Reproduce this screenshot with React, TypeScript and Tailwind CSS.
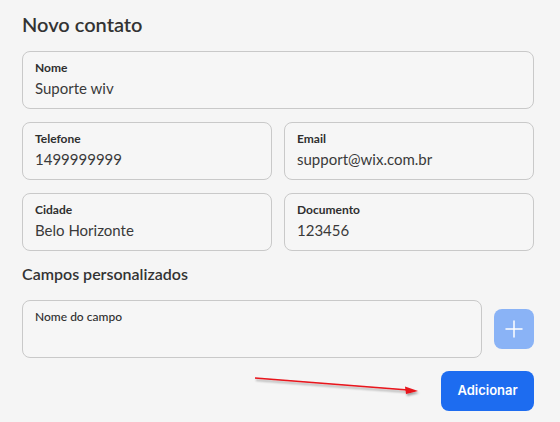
function Field({ label, value, bold = true, className = "" }: { label: string; value?: string; bold?: boolean; className?: string }) {
  return (
    <div className={`h-[58px] rounded-[8px] border border-[#c9c9c9] bg-[#f6f6f6] px-[12px] pt-[8px] ${className}`}>
      <div className={`text-[12px] leading-[16px] text-[#2f2f2f] ${bold ? "font-bold" : "font-medium"}`}>{label}</div>
      {value && <div className="mt-[1px] text-[15px] leading-[22px] text-[#3a3a3a]">{value}</div>}
    </div>
  );
}

export default function App() {
  return (
    <div className="relative min-h-screen w-full bg-[#f5f5f5] pl-[22px] pr-[26px] pt-[10px] font-['Lato',sans-serif]">
      <h1 className="text-[20px] leading-[28px] font-semibold text-[#333]">Novo contato</h1>

      <div className="mt-[13px] flex flex-col gap-[13px]">
        <Field label="Nome" value="Suporte wiv" />
        <div className="grid grid-cols-2 gap-[12px]">
          <Field label="Telefone" value="1499999999" />
          <Field label="Email" value="support@wix.com.br" />
        </div>
        <div className="grid grid-cols-2 gap-[12px]">
          <Field label="Cidade" value="Belo Horizonte" />
          <Field label="Documento" value="123456" />
        </div>
      </div>

      <h2 className="mt-[12px] text-[16px] leading-[22px] font-semibold text-[#333]">Campos personalizados</h2>

      <div className="mt-[15px] flex items-center gap-[12px]">
        <Field label="Nome do campo" bold={false} className="flex-1" />
        <button className="flex h-[40px] w-[40px] items-center justify-center rounded-[8px] bg-[#8ab3f6]">
          <svg width="20" height="20" viewBox="0 0 20 20" fill="none">
            <path d="M10 2v16M2 10h16" stroke="white" strokeWidth="1.5" strokeLinecap="round" />
          </svg>
        </button>
      </div>

      <div className="mt-[13px] flex justify-end">
        <button className="h-[40px] w-[93px] rounded-[8px] bg-[#1d6cf0] font-['Inter',sans-serif] text-[13px] font-semibold text-white">
          Adicionar
        </button>
      </div>

      {/* seta de anotação */}
      <svg className="pointer-events-none absolute left-[250px] top-[370px]" width="180" height="30" viewBox="0 0 180 30">
        <defs>
          <filter id="sh" x="-10%" y="-50%" width="120%" height="200%">
            <feDropShadow dx="1" dy="2" stdDeviation="1.2" floodColor="#000" floodOpacity="0.35" />
          </filter>
        </defs>
        <g filter="url(#sh)">
          <line x1="5" y1="8" x2="158" y2="20" stroke="#e8141b" strokeWidth="1.6" />
          <path d="M168 21 L155 16.5 L156 24 Z" fill="#e8141b" />
        </g>
      </svg>
    </div>
  );
}
